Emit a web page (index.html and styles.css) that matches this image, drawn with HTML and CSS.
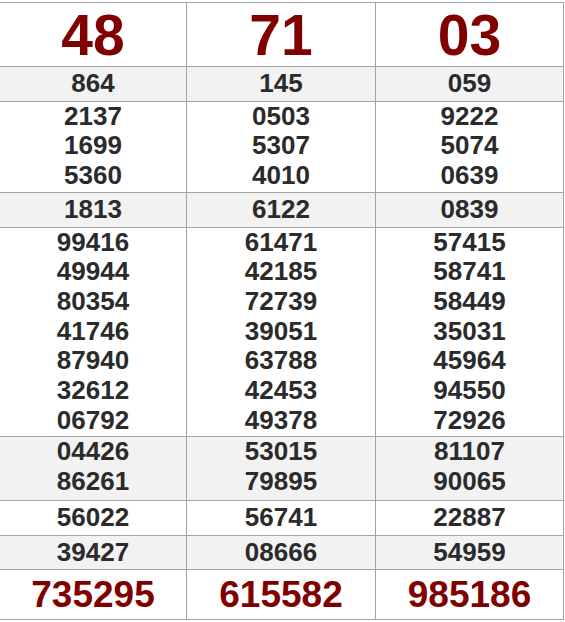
FILE: index.html
```html
<!DOCTYPE html>
<html>
<head>
<meta charset="utf-8">
<link rel="stylesheet" href="styles.css">
</head>
<body>
<table class="results">
  <colgroup><col class="c1"><col class="c2"><col class="c3"></colgroup>
  <tr class="head"><td>48</td><td>71</td><td>03</td></tr>
  <tr class="alt"><td>864</td><td>145</td><td>059</td></tr>
  <tr class="multi"><td>2137<br>1699<br>5360</td><td>0503<br>5307<br>4010</td><td>9222<br>5074<br>0639</td></tr>
  <tr class="alt"><td>1813</td><td>6122</td><td>0839</td></tr>
  <tr class="multi"><td>99416<br>49944<br>80354<br>41746<br>87940<br>32612<br>06792</td><td>61471<br>42185<br>72739<br>39051<br>63788<br>42453<br>49378</td><td>57415<br>58741<br>58449<br>35031<br>45964<br>94550<br>72926</td></tr>
  <tr class="alt multi pair"><td>04426<br>86261</td><td>53015<br>79895</td><td>81107<br>90065</td></tr>
  <tr><td>56022</td><td>56741</td><td>22887</td></tr>
  <tr class="alt"><td>39427</td><td>08666</td><td>54959</td></tr>
  <tr class="foot"><td>735295</td><td>615582</td><td>985186</td></tr>
</table>
</body>
</html>
```

FILE: styles.css
```css
html, body {
  margin: 0;
  padding: 0;
  background: #ffffff;
}
body {
  padding-top: 2px;
}
.results {
  border-collapse: collapse;
  table-layout: fixed;
  width: 564px;
  margin-left: -1px;
  font-family: "Liberation Sans", Arial, sans-serif;
  font-weight: bold;
}
.c1 { width: 187px; }
.c2 { width: 189px; }
.c3 { width: 188px; }
.results td {
  border: 1px solid #a3a3a3;
  text-align: center;
  vertical-align: middle;
  color: #2b2b2b;
  font-size: 26px;
  line-height: 29.7px;
  padding: 2px 0;
}
.results tr.multi td {
  padding: 0 0 1px;
}
.results tr.pair td {
  padding: 0 0 3px;
}
.results tr.alt td {
  background: #f2f2f2;
}
.results tr.head td {
  color: #800000;
  font-size: 57px;
  line-height: 60px;
  height: 63px;
  padding: 0;
}
.results tr.foot td {
  color: #800000;
  font-size: 37px;
  line-height: 40px;
  height: 49px;
  padding: 0;
}
```
